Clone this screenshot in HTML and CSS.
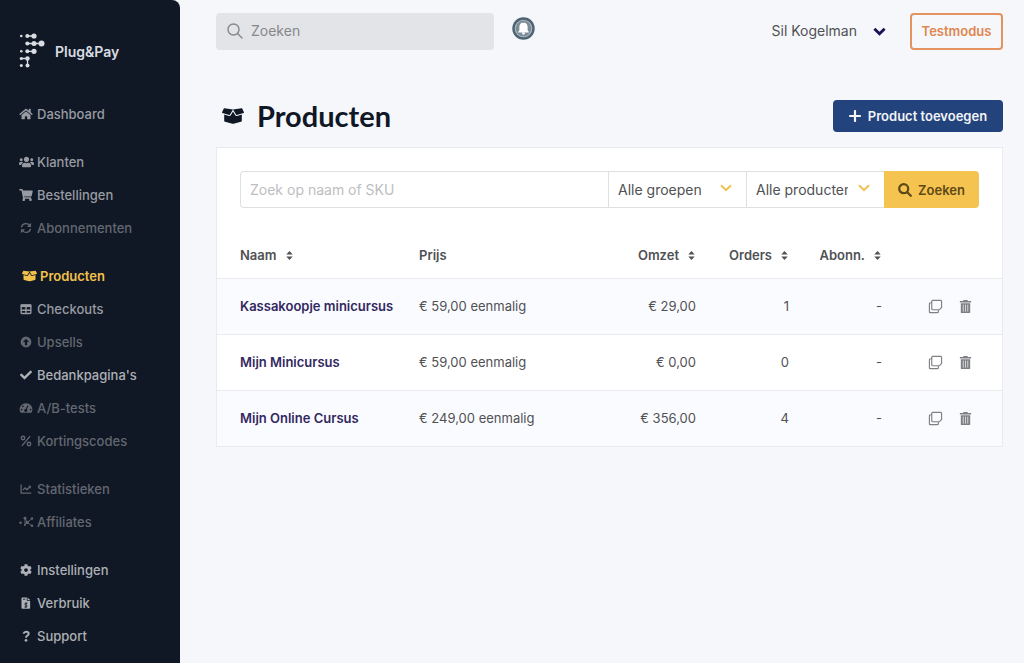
FILE: index.html
```html
<!DOCTYPE html>
<html lang="nl">
<head>
<meta charset="utf-8">
<meta name="viewport" content="width=device-width, initial-scale=1">
<title>Producten</title>
<link rel="stylesheet" href="styles.css">
</head>
<body>
<svg class="defs" aria-hidden="true">
  <symbol id="box" viewBox="0 0 640 512"><path d="M425.7 256c-16.9 0-32.8-9-41.4-23.4L320 126l-64.2 106.6c-8.7 14.5-24.6 23.5-41.5 23.5-4.5 0-9-.6-13.3-1.9L64 215v178c0 14.7 10 27.5 24.2 31l216.2 54.1c10.2 2.5 20.9 2.5 31 0L551.8 424c14.2-3.6 24.2-16.4 24.2-31V215l-137 39.1c-4.3 1.3-8.8 1.9-13.3 1.9zm212.6-112.2L586.8 41c-3.1-6.2-9.8-9.8-16.7-8.9L320 64l91.7 152.1c3.8 6.3 11.4 9.3 18.5 7.3l197.9-56.5c9.9-2.9 14.7-13.9 10.2-23.1zM53.2 41L1.7 143.8c-4.6 9.2.3 20.2 10.1 23l197.9 56.5c7.1 2 14.7-1 18.5-7.3L320 64 69.8 32.1c-6.9-.8-13.5 2.7-16.6 8.9z"/></symbol>
  <symbol id="sort" viewBox="0 0 8 12"><path d="M4 1 7.500 5H.5zM4 11 .5 7h7z"/></symbol>
  <symbol id="copy" viewBox="0 0 16 16"><path d="M5 1.500h8.500a1 1 0 0 1 1 1V9L12 11.500H5a1 1 0 0 1-1-1v-8a1 1 0 0 1 1-1zM3.500 4h-1a1 1 0 0 0-1 1v8.500a1 1 0 0 0 1 1H10a1 1 0 0 0 1-1v-1.500" fill="none" stroke="currentColor" stroke-width="1.200"/></symbol>
  <symbol id="trash" viewBox="0 0 14 16"><path d="M5 1h4l.6 1H13v1.600H1V2h3.400z"/><path d="M2 4.500h10V14a1 1 0 0 1-1 1H3a1 1 0 0 1-1-1z"/><path d="M4.600 6v7.500M7 6v7.500M9.400 6v7.500" stroke="#e4e5e8" stroke-width=".9"/></symbol>
</svg>
<div class="app">
  <aside class="sidebar">
    <a class="brand" href="#">
      <svg class="brand-mark" viewBox="0 0 26 36" aria-hidden="true">
        <g stroke="currentColor" stroke-width="1.300"><path d="M8 3h7M8 10.500h14M8 18.300h7M2 25.500h7M8.500 25.500v7"/></g>
        <circle cx="2.300" cy="3" r="1.300"/><circle cx="8.300" cy="3" r="2"/><circle cx="15" cy="3" r="2.600"/>
        <circle cx="8.300" cy="10.500" r="2"/><circle cx="15" cy="10.500" r="2.500"/><circle cx="22.500" cy="10.500" r="3"/>
        <circle cx="2.300" cy="18.300" r="1.300"/><circle cx="8.300" cy="18.300" r="2"/><circle cx="15" cy="18.300" r="2.600"/>
        <circle cx="2.300" cy="25.500" r="1.600"/><circle cx="8.500" cy="25.500" r="2.200"/>
        <circle cx="2.300" cy="32.500" r="1.500"/><circle cx="8.500" cy="32.500" r="2"/>
      </svg>
      <span>Plug&amp;Pay</span>
    </a>
    <nav class="nav">
      <ul class="group">
        <li><a class="item" href="#"><svg class="ico" viewBox="0 0 576 512"><path d="M280.400 148.300L96 300.100V464a16 16 0 0 0 16 16l112-.3a16 16 0 0 0 16-16V368a16 16 0 0 1 16-16h64a16 16 0 0 1 16 16v95.600a16 16 0 0 0 16 16L464 480a16 16 0 0 0 16-16V300L295.700 148.300a12.200 12.200 0 0 0-15.300 0zM571.600 251.500L488 182.600V44a12 12 0 0 0-12-12h-56a12 12 0 0 0-12 12v72.600L318.500 43a48 48 0 0 0-61 0L4.300 251.500a12 12 0 0 0-1.600 16.900l25.500 31A12 12 0 0 0 45.200 301l235.200-193.700a12.200 12.200 0 0 1 15.300 0L530.900 301a12 12 0 0 0 16.900-1.600l25.500-31a12 12 0 0 0-1.700-16.900z"/></svg>Dashboard</a></li>
      </ul>
      <ul class="group">
        <li><a class="item" href="#"><svg class="ico wide" viewBox="0 0 640 512"><path d="M96 224c35.300 0 64-28.700 64-64s-28.700-64-64-64-64 28.700-64 64 28.700 64 64 64zm448 0c35.300 0 64-28.700 64-64s-28.700-64-64-64-64 28.700-64 64 28.700 64 64 64zm32 32h-64c-17.600 0-33.500 7.100-45.100 18.600 40.300 22.100 68.900 62 75.100 109.400h66c17.700 0 32-14.300 32-32v-32c0-35.300-28.700-64-64-64zm-256 0c61.900 0 112-50.100 112-112S381.900 32 320 32 208 82.100 208 144s50.100 112 112 112zm76.800 32h-8.300c-20.800 10-43.900 16-68.500 16s-47.600-6-68.500-16h-8.300C179.600 288 128 339.600 128 403.200V432c0 26.500 21.500 48 48 48h288c26.500 0 48-21.500 48-48v-28.800c0-63.600-51.600-115.200-115.200-115.200zm-223.700-13.400C161.500 263.100 145.600 256 128 256H64c-35.300 0-64 28.700-64 64v32c0 17.700 14.300 32 32 32h65.900c6.300-47.400 34.900-87.300 75.200-109.400z"/></svg>Klanten</a></li>
        <li><a class="item" href="#"><svg class="ico" viewBox="0 0 576 512"><path d="M528.100 301.300l47.300-208C578.800 78.300 567.400 64 552 64H159.200l-9.200-44.800C147.800 8 137.900 0 126.500 0H24C10.700 0 0 10.700 0 24v16c0 13.300 10.700 24 24 24h69.900l70.200 343.400C147.300 417.100 136 435.200 136 456c0 30.900 25.100 56 56 56s56-25.100 56-56c0-15.700-6.400-29.800-16.800-40h209.600C430.400 426.200 424 440.300 424 456c0 30.900 25.100 56 56 56s56-25.100 56-56c0-22.200-12.900-41.300-31.600-50.400l5.500-24.300c3.400-15-8-29.300-23.400-29.300H218.100l-6.500-32h293.100c11.200 0 20.900-7.800 23.400-18.700z"/></svg>Bestellingen</a></li>
        <li><a class="item dim" href="#"><svg class="ico" viewBox="0 0 16 16"><path d="M2 7a6 6 0 0 1 11-2M14 9a6 6 0 0 1-11 2" fill="none" stroke="currentColor" stroke-width="1.800"/><path d="M14.800 1v5.500H9.300zM1.200 15V9.500h5.500z"/></svg>Abonnementen</a></li>
      </ul>
      <ul class="group">
        <li><a class="item active" href="#" aria-current="page"><svg class="ico wide"><use href="#box"/></svg>Producten</a></li>
        <li><a class="item" href="#"><svg class="ico" viewBox="0 0 16 16"><path d="M1.500 3.500a1 1 0 0 1 1-1h11a1 1 0 0 1 1 1v9.500a1 1 0 0 1-1 1h-11a1 1 0 0 1-1-1zM2 9.700h12M8 5v9" fill="none" stroke="currentColor" stroke-width="1.800"/><path d="M1 2h14v3.500H1z"/></svg>Checkouts</a></li>
        <li><a class="item dim" href="#"><svg class="ico" viewBox="0 0 16 16"><path fill-rule="evenodd" d="M8 .8a7.200 7.200 0 1 1 0 14.400A7.200 7.200 0 0 1 8 .8zM8 3.500 3.900 8h2.600v4.200h3V8h2.600z"/></svg>Upsells</a></li>
        <li><a class="item bright" href="#"><svg class="ico" viewBox="0 0 512 512"><path d="M173.900 439.400l-166.400-166.400c-10-10-10-26.200 0-36.200l36.200-36.200c10-10 26.200-10 36.200 0L192 312.700 432.100 72.600c10-10 26.200-10 36.200 0l36.200 36.200c10 10 10 26.200 0 36.200l-294.400 294.400c-10 10-26.200 10-36.200 0z"/></svg>Bedankpagina's</a></li>
        <li><a class="item dim" href="#"><svg class="ico" viewBox="0 0 18 16"><path fill-rule="evenodd" d="M9 1.500a8.500 8.500 0 0 1 7.300 12.800H1.700A8.500 8.500 0 0 1 9 1.500zm1.900 3L8.600 9.200a2 2 0 1 0 1.500.6l2.200-4.600zM4.800 4.800a1 1 0 1 0 .1 0zM3 9a1 1 0 1 0 .1 0zM15 9a1 1 0 1 0 .1 0z"/></svg>A/B-tests</a></li>
        <li><a class="item dim" href="#"><svg class="ico" viewBox="0 0 16 16" fill="none" stroke="currentColor" stroke-width="1.800"><path d="M2.500 14.500 13.500 1.500"/><circle cx="4" cy="4" r="2.300"/><circle cx="12" cy="12" r="2.300"/></svg>Kortingscodes</a></li>
      </ul>
      <ul class="group">
        <li><a class="item dim" href="#"><svg class="ico" viewBox="0 0 16 16"><path d="M1.500 2v11.500H15M3.800 9.500l3-3 2.500 2.500L13 5.300" fill="none" stroke="currentColor" stroke-width="1.700"/><path d="M10.500 3.500h4v4z"/></svg>Statistieken</a></li>
        <li><a class="item dim" href="#"><svg class="ico wide" viewBox="0 0 20 16"><path d="M8 3l3 5.500 6-5M11 8.500l6 4.500M8 3v8l3-2.500" fill="none" stroke="currentColor" stroke-width="1.200"/><circle cx="2" cy="9" r="1.700"/><circle cx="8" cy="3" r="1.900"/><circle cx="11" cy="8.500" r="2.100"/><circle cx="17.300" cy="3.300" r="1.600"/><circle cx="17.300" cy="13" r="1.700"/><circle cx="8" cy="12" r="1.400"/></svg>Affiliates</a></li>
      </ul>
      <ul class="group">
        <li><a class="item bright" href="#"><svg class="ico" viewBox="0 0 512 512"><path d="M487.400 315.700l-42.600-24.600c4.300-23.200 4.300-47 0-70.200l42.600-24.600c4.900-2.800 7.100-8.600 5.500-14-11.100-35.600-30-67.800-54.700-94.600-3.800-4.100-10-5.100-14.800-2.300L380.800 110c-17.900-15.400-38.500-27.300-60.800-35.100V25.800c0-5.600-3.900-10.500-9.400-11.700-36.700-8.200-74.300-7.800-109.200 0-5.500 1.200-9.400 6.100-9.400 11.700V75c-22.200 7.900-42.800 19.800-60.800 35.100L88.700 85.500c-4.900-2.800-11-1.900-14.800 2.300-24.700 26.700-43.600 58.900-54.700 94.600-1.700 5.400.6 11.200 5.500 14L67.300 221c-4.300 23.200-4.300 47 0 70.200l-42.600 24.600c-4.900 2.800-7.100 8.600-5.500 14 11.100 35.600 30 67.800 54.700 94.600 3.800 4.100 10 5.100 14.800 2.300l42.600-24.600c17.900 15.400 38.500 27.300 60.800 35.100v49.200c0 5.600 3.900 10.500 9.400 11.700 36.700 8.200 74.300 7.800 109.200 0 5.500-1.200 9.400-6.100 9.400-11.700v-49.200c22.200-7.900 42.800-19.800 60.800-35.100l42.600 24.600c4.900 2.800 11 1.900 14.800-2.300 24.700-26.700 43.600-58.900 54.700-94.600 1.500-5.500-.7-11.300-5.600-14.100zM256 336c-44.100 0-80-35.900-80-80s35.900-80 80-80 80 35.900 80 80-35.900 80-80 80z"/></svg>Instellingen</a></li>
        <li><a class="item bright" href="#"><svg class="ico" viewBox="0 0 16 16"><path d="M3 .5h6V5h4.500v9.500a1 1 0 0 1-1 1H3a1 1 0 0 1-1-1v-13a1 1 0 0 1 1-1zM10 .5 13.500 4H10z"/><path d="M4 3h3M10 8.300H7.300a1.300 1.300 0 0 0 0 2.500h1.200a1.300 1.300 0 0 1 0 2.500H5.800M8 7v7.500" fill="none" stroke="#101826" stroke-width="1.100"/></svg>Verbruik</a></li>
        <li><a class="item bright" href="#"><svg class="ico" viewBox="0 0 16 16"><path d="M4.500 4.800C5.300 3 6.500 2.200 8.200 2.200c2 0 3.400 1.100 3.400 2.700 0 2.600-3.600 2.400-3.600 5.300" fill="none" stroke="currentColor" stroke-width="2.600"/><circle cx="8" cy="13.800" r="1.800"/></svg>Support</a></li>
      </ul>
    </nav>
  </aside>
  <main class="main">
    <header class="topbar">
      <label class="search">
        <svg class="search-ico" viewBox="0 0 16 16" fill="none" stroke="currentColor" stroke-width="1.400" stroke-linecap="round"><circle cx="6.500" cy="6.500" r="5.500"/><path d="M10.500 10.500 15 15"/></svg>
        <input class="search-input" type="search" placeholder="Zoeken" aria-label="Zoeken">
      </label>
      <button class="bell" type="button" aria-label="Meldingen">
        <svg viewBox="0 0 24 24"><circle cx="12" cy="12" r="11.700" fill="#4f6472"/><circle cx="12" cy="12" r="8.600" fill="#7b8b96" stroke="#a9b5be" stroke-width="1.200"/><path fill="#fff" d="M12 5.800c-2.700 0-4.300 2-4.300 4.500v3.500l-1.200 1.700v.7h11v-.7l-1.200-1.700v-3.500c0-2.500-1.600-4.500-4.300-4.500zM10.500 16h3v1a1.500 1.500 0 0 1-3 0z"/></svg>
      </button>
      <button class="user" type="button">Sil Kogelman
        <svg class="user-chev" viewBox="0 0 14 9" fill="none" stroke="#1c1058" stroke-width="3"><path d="M1.500 1.500 7 7l5.500-5.500"/></svg>
      </button>
      <button class="testmode" type="button">Testmodus</button>
    </header>
    <div class="heading">
      <h1 class="title"><svg class="title-ico"><use href="#box"/></svg>Producten</h1>
      <button class="add" type="button"><svg class="plus" viewBox="0 0 12 12" stroke="currentColor" stroke-width="2.200" stroke-linecap="round"><path d="M6 1v10M1 6h10"/></svg>Product toevoegen</button>
    </div>
    <section class="card">
      <form class="filters">
        <input class="field name" type="text" placeholder="Zoek op naam of SKU" aria-label="Zoek op naam of SKU">
        <div class="pick"><select class="field" aria-label="Groep"><option>Alle groepen</option></select><svg class="pick-chev" viewBox="0 0 12 8"><path d="M1 1.200 6 6.200l5-5"/></svg></div>
        <div class="pick"><select class="field" aria-label="Product"><option>Alle producten</option></select><svg class="pick-chev" viewBox="0 0 12 8"><path d="M1 1.200 6 6.200l5-5"/></svg></div>
        <button class="go" type="button"><svg class="go-ico" viewBox="0 0 14 14" fill="none" stroke="currentColor" stroke-width="2.200" stroke-linecap="round"><circle cx="5.700" cy="5.700" r="4.500"/><path d="m9.300 9.300 3.500 3.500"/></svg>Zoeken</button>
      </form>
      <table class="table">
        <colgroup><col class="c-name"><col><col class="c-rev"><col class="c-num"><col class="c-num"><col class="c-act"></colgroup>
        <thead>
          <tr>
            <th scope="col">Naam<svg class="sort"><use href="#sort"/></svg></th>
            <th scope="col">Prijs</th>
            <th scope="col" class="num">Omzet<svg class="sort"><use href="#sort"/></svg></th>
            <th scope="col" class="num">Orders<svg class="sort"><use href="#sort"/></svg></th>
            <th scope="col" class="num">Abonn.<svg class="sort"><use href="#sort"/></svg></th>
            <td></td>
          </tr>
        </thead>
        <tbody>
          <tr>
            <td><a class="product" href="#">Kassakoopje minicursus</a></td><td>€ 59,00 eenmalig</td><td class="num">€ 29,00</td><td class="num">1</td><td class="num">-</td>
            <td><div class="actions"><button class="act" type="button" aria-label="Dupliceren"><svg><use href="#copy"/></svg></button><button class="act" type="button" aria-label="Verwijderen"><svg><use href="#trash"/></svg></button></div></td>
          </tr>
          <tr>
            <td><a class="product" href="#">Mijn Minicursus</a></td><td>€ 59,00 eenmalig</td><td class="num">€ 0,00</td><td class="num">0</td><td class="num">-</td>
            <td><div class="actions"><button class="act" type="button" aria-label="Dupliceren"><svg><use href="#copy"/></svg></button><button class="act" type="button" aria-label="Verwijderen"><svg><use href="#trash"/></svg></button></div></td>
          </tr>
          <tr>
            <td><a class="product" href="#">Mijn Online Cursus</a></td><td>€ 249,00 eenmalig</td><td class="num">€ 356,00</td><td class="num">4</td><td class="num">-</td>
            <td><div class="actions"><button class="act" type="button" aria-label="Dupliceren"><svg><use href="#copy"/></svg></button><button class="act" type="button" aria-label="Verwijderen"><svg><use href="#trash"/></svg></button></div></td>
          </tr>
        </tbody>
      </table>
    </section>
  </main>
</div>
</body>
</html>
```
FILE: styles.css
```css
* { box-sizing: border-box; }
body {
  margin: 0;
  background: #f5f7fb;
  color: #505154;
  font: 400 13px/20px Inter, "Liberation Sans", sans-serif;
}
button, input, select { font: inherit; color: inherit; margin: 0; }
button { cursor: pointer; border: 0; background: none; padding: 0; }
a { color: inherit; text-decoration: none; }
svg { display: block; flex: none; }
svg:not([fill]) { fill: currentColor; }
.defs { width: 0; height: 0; position: absolute; }
.app { display: flex; min-height: 100vh; }

.sidebar {
  flex: 0 0 180px;
  background: #101826;
  color: #989ba1;
  border-top-right-radius: 8px;
  padding: 32px 0 0 19px;
}
.brand {
  display: flex;
  align-items: center;
  gap: 10px;
  height: 37px;
  color: #d9dde2;
  font-size: 14px;
  font-weight: 600;
}
.brand span { padding-top: 2px; }
.brand-mark { width: 26px; height: 36px; }
.nav { display: flex; flex-direction: column; gap: 15px; margin-top: 28px; }
.group { list-style: none; margin: 0; padding: 0; }
.item {
  display: flex;
  align-items: center;
  gap: 4px;
  height: 33px;
  font-weight: 500;
}
.ico { width: 14px; height: 12px; }
.ico.wide { width: 15px; margin-right: -1px; }
.item.dim { color: #63676f; }
.item.bright { color: #adb0b4; }
.item.active { color: #f2c14b; font-weight: 600; padding-left: 3px; }

.main { flex: 1; min-width: 0; padding: 13px 21px 24px 36px; }
.topbar { display: flex; align-items: center; height: 36px; }
.search {
  display: flex;
  align-items: center;
  flex: 0 1 278px;
  gap: 8px;
  height: 37px;
  padding: 0 11px;
  border-radius: 4px;
  background: #e3e4e7;
  color: #85878b;
  font-size: 14px;
}
.search-ico { width: 16px; height: 16px; }
.search-input { flex: 1; min-width: 0; border: 0; padding: 0; background: none; }
.search-input::placeholder { color: #85878b; opacity: 1; }
.bell { width: 23px; height: 23px; margin: 0 auto 5px 18px; }
.bell svg { width: 23px; height: 23px; }
.user { display: flex; align-items: center; gap: 16px; font-size: 14px; }
.user-chev { width: 13px; height: 9px; }
.testmode {
  height: 37px;
  width: 93px;
  margin-left: 24px;
  border: 2px solid #e3935f;
  border-radius: 4px;
  color: #e08650;
  font-weight: 600;
}

.heading { display: flex; align-items: center; justify-content: space-between; margin: 49px 0 13px; }
.title {
  display: flex;
  align-items: center;
  gap: 13px;
  margin: 0;
  padding-left: 6px;
  color: #101826;
  font: 700 29px/36px Lato, sans-serif;
}
.title-ico { width: 22px; height: 18px; }
.add {
  display: flex;
  align-items: center;
  justify-content: center;
  gap: 7px;
  width: 170px;
  height: 32px;
  border-radius: 4px;
  background: #23437c;
  color: #f2f4f8;
  font-weight: 600;
}
.plus { width: 12px; height: 12px; }

.card { border: 1px solid #e9ebef; background: #fff; }
.filters { display: flex; padding: 23px 23px 24px; font-size: 14px; }
.field {
  display: block;
  appearance: none;
  width: 100%;
  height: 37px;
  border: 1px solid #dddfe1;
  border-right: 0;
  border-radius: 0;
  background: #fff;
  padding: 0 9px;
}
.field.name { flex: 1; width: auto; min-width: 0; border-radius: 4px 0 0 4px; }
.field::placeholder { color: #bdbec0; opacity: 1; }
.pick { position: relative; flex: 0 0 138px; }
.pick .field { padding-right: 36px; }
.pick-chev {
  position: absolute;
  top: 13px;
  right: 14px;
  width: 12px;
  height: 8px;
  stroke: #f0c24f;
  stroke-width: 2;
}
.pick-chev:not([fill]) { fill: none; pointer-events: none; }
.go {
  display: flex;
  align-items: center;
  justify-content: center;
  gap: 6px;
  width: 95px;
  height: 37px;
  border-radius: 0 4px 4px 0;
  background: #f5c34f;
  color: #5d4818;
  font-size: 13px;
  font-weight: 600;
}
.go-ico { width: 14px; height: 14px; }

.table { width: 100%; table-layout: fixed; border-collapse: collapse; }
.c-name { width: 202px; }
.c-rev { width: 98px; }
.c-num { width: 93px; }
.c-act { width: 120px; }
.table th, .table td { padding: 0; text-align: left; height: 56px; }
.table thead th, .table thead td { height: 46px; font-weight: 600; }
.table tr > :first-child { padding-left: 23px; }
.table .num { text-align: right; }
.sort { display: inline-block; width: 9px; height: 11px; margin-left: 8px; vertical-align: -1px; }
.table tbody tr { border-top: 1px solid #e9ebef; }
.table tbody tr:nth-child(odd) { background: #fafbff; }
.product { color: #33285f; font-weight: 600; }
.actions { display: flex; justify-content: flex-end; gap: 15px; padding-right: 29px; }
.act { color: #7d7f83; }
.act svg { width: 15px; height: 15px; }
```
